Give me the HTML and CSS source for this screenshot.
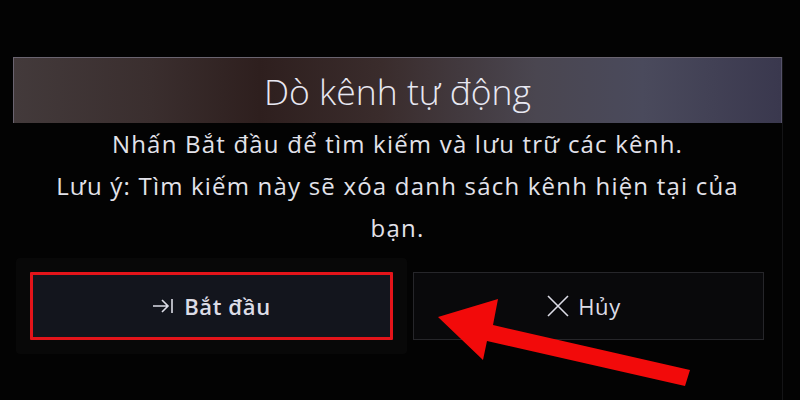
FILE: index.html
```html
<!DOCTYPE html>
<html lang="vi">
<head>
<meta charset="utf-8">
<title>Dò kênh tự động</title>
<link rel="stylesheet" href="styles.css">
</head>
<body>
<div class="screen">
  <div class="panel">
    <div class="title">Dò kênh tự động</div>
    <div class="message">
      <p>Nhấn Bắt đầu để tìm kiếm và lưu trữ các kênh.</p>
      <p>Lưu ý: Tìm kiếm này sẽ xóa danh sách kênh hiện tại của<br>bạn.</p>
    </div>
    <div class="buttons">
      <div class="btn btn-start">
        <svg class="icon" width="22" height="18" viewBox="0 0 22 18"><path d="M1 9H16M10 3L16 9L10 15M20 2V16" fill="none" stroke="#dcdce6" stroke-width="1.6"/></svg>
        <span>Bắt đầu</span>
      </div>
      <div class="btn btn-cancel">
        <svg class="icon" width="24" height="24" viewBox="0 0 24 24"><path d="M2 2L22 22M22 2L2 22" fill="none" stroke="#dcdce6" stroke-width="1.6"/></svg>
        <span>Hủy</span>
      </div>
    </div>
  </div>
</div>
<svg class="pointer" width="800" height="400" viewBox="0 0 800 400"><polygon points="438,317 498,299 493,325 690,370 685,386 487,341 483,360" fill="#f20a0a"/></svg>
</body>
</html>
```
FILE: styles.css
```css
html, body {
  margin: 0;
  padding: 0;
}
body {
  width: 800px;
  height: 400px;
  overflow: hidden;
  background: #030303;
  font-family: "Open Sans", "Noto Sans", sans-serif;
  color: #e4e4ec;
  position: relative;
}
.screen {
  padding: 57px 18px 0 13px;
}
.panel {
  width: 769px;
  border-right: 1px solid #141416;
  min-height: 343px;
}
.title {
  height: 66px;
  box-sizing: border-box;
  border-top: 1px solid #6a6470;
  border-left: 1px solid #6a6470;
  border-right: 1px solid #55526a;
  background: linear-gradient(90deg, #433a3b 0%, #3a2e2e 18%, #2e1f1e 32%, #3a2c2c 48%, #4a4650 68%, #4a4a5c 82%, #3a384e 100%);
  display: flex;
  align-items: center;
  justify-content: center;
  font-size: 35.5px;
  font-weight: 300;
  color: #e8e8f2;
}
.message {
  text-align: center;
  font-size: 24px;
  line-height: 42px;
  letter-spacing: 1.2px;
  color: #e2e2ea;
}
.message p {
  margin: 0;
}
.buttons {
  display: flex;
  gap: 20px;
  margin-top: 23px;
  padding-left: 17px;
}
.btn {
  height: 68px;
  box-sizing: border-box;
  display: flex;
  align-items: center;
  justify-content: center;
  gap: 10px;
  font-size: 22px;
  letter-spacing: 0.6px;
  color: #dcdce6;
}
.btn-start {
  width: 363px;
  border: 3px solid #e3141a;
  background: #13151d;
  font-weight: 600;
  box-shadow: 0 0 0 14px #080808;
  border-radius: 1px;
}
.btn-cancel {
  width: 351px;
  border: 1px solid #26262a;
  background: #09090b;
  gap: 8px;
  padding-right: 10px;
}
.pointer {
  position: absolute;
  left: 0;
  top: 0;
}
```
